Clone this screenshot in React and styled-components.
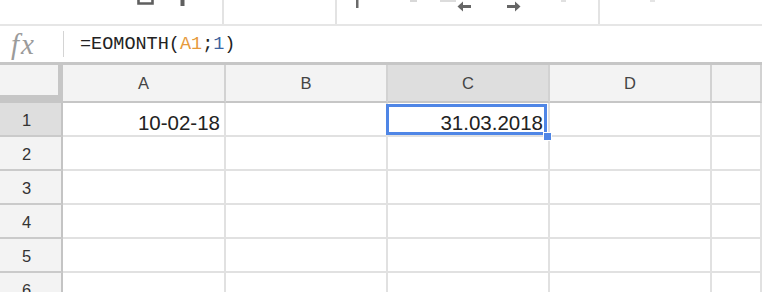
import styled, { createGlobalStyle } from 'styled-components'

const GlobalStyle = createGlobalStyle`
	html,
	body {
		margin: 0;
		padding: 0;
		background: #fff;
		overflow: hidden;
	}

	body {
		font-family: 'Liberation Sans', Arial, sans-serif;
	}

	* {
		box-sizing: border-box;
	}
`

const Page = styled.div`
	width: 762px;
	height: 292px;
	overflow: hidden;
`

// top toolbar, cut off by the screenshot: only the bottoms of the icons show
const Toolbar = styled.div`
	display: flex;
	height: 26px;
	border-bottom: 2px solid #e6e6e6;
	overflow: hidden;
`

const ToolGroup = styled.div`
	display: flex;
	align-items: flex-start;
	flex: ${(p) => (p.$grow ? '1' : 'none')};
	width: ${(p) => (p.$width ? p.$width + 'px' : 'auto')};
	padding-left: ${(p) => p.$pad || 0}px;
	border-right: ${(p) => (p.$last ? 'none' : '2px solid #e3e3e3')};
`

const ToolIcon = styled.svg`
	flex: none;
	margin-left: ${(p) => p.$gap || 0}px;
	margin-top: ${(p) => p.$top || 0}px;
`

const ZoomText = styled.span`
	margin-top: -14px;
	font-size: 16px;
	line-height: 18px;
	color: #555;
`

const FormulaBar = styled.div`
	display: flex;
	align-items: center;
	height: 36px;
`

const FxLabel = styled.div`
	width: 63px;
	padding-left: 11px;
	font-family: 'Liberation Serif', 'Times New Roman', serif;
	font-style: italic;
	font-size: 29px;
	letter-spacing: 2px;
	color: #9b9b9b;
	line-height: 1;
`

const BarDivider = styled.div`
	width: 1px;
	height: 26px;
	background: #d4d4d4;
`

const FormulaText = styled.div`
	margin-left: 16px;
	font-family: 'Liberation Mono', 'DejaVu Sans Mono', monospace;
	font-size: 18.5px;
	color: #222;
	white-space: pre;
`

const Ref = styled.span`
	color: ${(p) => p.$color};
`

const Grid = styled.div`
	display: grid;
	grid-template-columns: 63px 163px 162px 162px 162px 50px;
	grid-template-rows: 38px repeat(6, 34px);
	border-top: 3px solid #c6c6c6;
`

const Corner = styled.div`
	background: #f3f3f3;
	border-right: 5px solid #c6c6c6;
	border-bottom: 8px solid #c6c6c6;
`

const ColHeader = styled.div`
	display: flex;
	align-items: center;
	justify-content: center;
	background: ${(p) => (p.$active ? '#dedede' : '#f3f3f3')};
	border-right: 2px solid #d2d2d2;
	border-bottom: 2px solid #c6c6c6;
	font-size: 16.5px;
	color: #444;
`

const RowHeader = styled.div`
	display: flex;
	align-items: center;
	justify-content: center;
	padding: 3px 8px 0 0;
	background: ${(p) => (p.$active ? '#dedede' : '#f3f3f3')};
	border-right: 2px solid #c4c4c4;
	border-bottom: 2px solid #cacaca;
	font-size: 16.5px;
	color: #333;
`

const Cell = styled.div`
	position: relative;
	display: flex;
	align-items: flex-end;
	justify-content: flex-end;
	padding: 0 ${(p) => (p.$selected ? 5 : 4)}px 2px 0;
	border-right: 2px solid #e1e1e1;
	border-bottom: 2px solid #e1e1e1;
	font-size: 20.5px;
	line-height: 21px;
	color: #222;

	${(p) =>
		p.$selected &&
		`
		&::after {
			content: '';
			position: absolute;
			top: 1px;
			left: -2px;
			right: 1px;
			bottom: 0;
			border: 3px solid #4f86e6;
			pointer-events: none;
		}
	`}
`

const FillHandle = styled.span`
	position: absolute;
	right: -4px;
	bottom: -6px;
	width: 9px;
	height: 9px;
	background: #4f86e6;
	border: 1px solid #fff;
	z-index: 2;
`

const columns = ['A', 'B', 'C', 'D', '']
const rows = [1, 2, 3, 4, 5, 6]
const data = { A1: '10-02-18', C1: '31.03.2018' }
const selected = { col: 'C', row: 1 }

export default function App() {
	return (
		<Page>
			<GlobalStyle />
			<Toolbar>
				<ToolGroup $width={224} $pad={137}>
					<ToolIcon width='17' height='6' viewBox='0 0 17 6' $top={-1}>
						<path d='M1.5 0 V4.5 H15.5 V0' fill='none' stroke='#5f5f5f' strokeWidth='2.6' />
					</ToolIcon>
					<ToolIcon width='6' height='7' viewBox='0 0 6 7' $gap={26}>
						<rect x='0.5' y='0' width='4' height='6' fill='#5f5f5f' />
					</ToolIcon>
				</ToolGroup>
				<ToolGroup $width={113} $pad={24}>
					<ZoomText>100%</ZoomText>
				</ToolGroup>
				<ToolGroup $width={263} $pad={18}>
					<ToolIcon width='5' height='9' viewBox='0 0 5 9'>
						<rect x='1' y='0' width='2.5' height='8' fill='#6a6a6a' />
					</ToolIcon>
					<ToolIcon width='8' height='6' viewBox='0 0 8 6' $gap={50}>
						<rect x='0' y='0' width='7' height='2' fill='#d8d8d8' />
					</ToolIcon>
					<ToolIcon width='17' height='6' viewBox='0 0 17 6' $gap={22}>
						<rect x='0' y='0' width='16' height='2' fill='#dcdcdc' />
					</ToolIcon>
					<ToolIcon width='14' height='12' viewBox='0 0 14 12'>
						<path d='M6 1.5 L0.5 6.5 L6 11.5 Z' fill='#666' />
						<rect x='4' y='5' width='10' height='3' fill='#666' />
					</ToolIcon>
					<ToolIcon width='14' height='12' viewBox='0 0 14 12' $gap={36}>
						<path d='M8 1.5 L13.5 6.5 L8 11.5 Z' fill='#666' />
						<rect x='0' y='5' width='10' height='3' fill='#666' />
					</ToolIcon>
					<ToolIcon width='6' height='5' viewBox='0 0 6 5' $gap={40}>
						<rect x='0' y='0' width='5' height='2' fill='#e0e0e0' />
					</ToolIcon>
				</ToolGroup>
				<ToolGroup $grow $last $pad={50}>
					<ToolIcon width='6' height='5' viewBox='0 0 6 5'>
						<rect x='0' y='0' width='5' height='2' fill='#e4e4e4' />
					</ToolIcon>
				</ToolGroup>
			</Toolbar>

			<FormulaBar>
				<FxLabel>fx</FxLabel>
				<BarDivider />
				<FormulaText>
					=EOMONTH(<Ref $color='#e69a3c'>A1</Ref>;<Ref $color='#3c64a0'>1</Ref>)
				</FormulaText>
			</FormulaBar>

			<Grid>
				<Corner />
				{columns.map((col, i) => (
					<ColHeader key={i} $active={col === selected.col}>
						{col}
					</ColHeader>
				))}
				{rows.map((row) => [
					<RowHeader key={'h' + row} $active={row === selected.row}>
						{row}
					</RowHeader>,
					...columns.map((col, i) => {
						const isSel = col === selected.col && row === selected.row
						return (
							<Cell key={row + '-' + i} $selected={isSel}>
								{data[col + row] || ''}
								{isSel && <FillHandle />}
							</Cell>
						)
					}),
				])}
			</Grid>
		</Page>
	)
}
